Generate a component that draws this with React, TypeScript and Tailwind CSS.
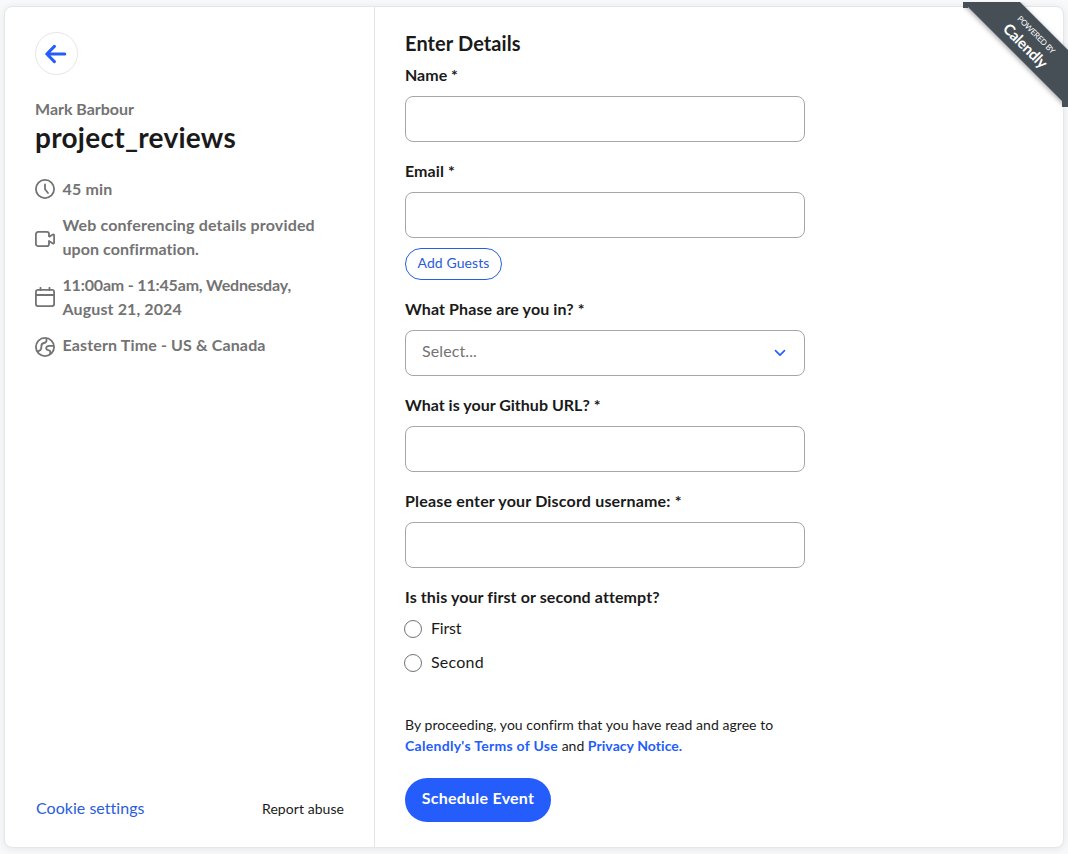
import React from "react";

const ink = "text-[#1a1a1a]";

function ClockIcon() {
  return (
    <svg className="h-5 w-5 shrink-0" viewBox="0 0 20 20" fill="none" stroke="currentColor" strokeWidth="1.8" strokeLinecap="round">
      <circle cx="10" cy="10" r="9.1" />
      <path d="M10 5.5V10.2L13 14" />
    </svg>
  );
}

function VideoIcon() {
  return (
    <svg className="mt-1.5 h-5 w-5 shrink-0" viewBox="0 0 20 20" fill="none" stroke="currentColor" strokeWidth="1.8" strokeLinejoin="round">
      <path d="M14 7V4.1A2.2 2.2 0 0 0 11.8 1.9H3.1A2.2 2.2 0 0 0 .9 4.1V13.9A2.2 2.2 0 0 0 3.1 16.1H11.8A2.2 2.2 0 0 0 14 13.9V11L17.8 13.4A.8.8 0 0 0 19.1 12.8V5.2A.8.8 0 0 0 17.8 4.6L14 7" />
    </svg>
  );
}

function CalendarIcon() {
  return (
    <svg className="h-5 w-5 shrink-0" viewBox="0 0 20 20" fill="none" stroke="currentColor" strokeWidth="1.8" strokeLinecap="round">
      <rect x=".9" y="2.9" width="18.2" height="16.2" rx="2" />
      <path d="M.9 8H19.1M5.5 .8V3M14.5 .8V3" />
    </svg>
  );
}

function GlobeIcon() {
  return (
    <svg className="mt-[3px] h-5 w-5 shrink-0" viewBox="0 0 20 20" fill="none" stroke="currentColor" strokeWidth="1.8">
      <circle cx="10" cy="10" r="9.1" />
      <path d="M11.5 1V3.6C11.5 5.2 10.6 5.8 9 6C7.2 6.3 6.3 7.4 6.4 9.2C6.5 11.4 6 12.9 4.4 13.6L2.4 14.6" />
      <path d="M19 8.8H14.5C12.3 8.8 11.1 9.9 11.2 11.3C11.3 12.8 12.5 13.2 14 13.3C15.6 13.4 15.3 15 15.1 17.3" />
    </svg>
  );
}

function Detail({ icon, children, gap }: { icon: React.ReactNode; children: React.ReactNode; gap?: string }) {
  return (
    <div className={`flex items-center gap-[7.5px] ${gap ?? "mt-3"}`}>
      {icon}
      <div>{children}</div>
    </div>
  );
}

function Field({ label, tracking, children }: { label: string; tracking: string; children?: React.ReactNode }) {
  return (
    <div>
      <label className={`block h-6 text-base leading-6 font-bold ${tracking}`}>{label}</label>
      <div className="mt-[9px] flex h-[46px] w-[400px] items-center justify-between rounded-lg border border-[#a6a6a6] px-4">{children}</div>
    </div>
  );
}

function Radio({ label, tracking }: { label: string; tracking: string }) {
  return (
    <label className="-ml-px flex h-6 items-center gap-[9px]">
      <span className="mt-0.5 h-[18px] w-[18px] rounded-full border border-[#737373]" />
      <span className={`text-base leading-6 ${tracking}`}>{label}</span>
    </label>
  );
}

function Ribbon() {
  return (
    <div className="absolute top-0.5 right-0 h-[105px] w-[105px] overflow-hidden">
      <svg className="absolute inset-0" width="105" height="105" viewBox="0 0 105 105">
        <defs>
          <filter id="ribbon-shadow" x="-10%" y="-10%" width="120%" height="120%">
            <feDropShadow dx="-1" dy="1" stdDeviation="2.5" floodColor="#000" floodOpacity=".35" />
          </filter>
        </defs>
        <path d="M-10 -10H47L115 58V115L-10 -10Z" fill="#474f57" filter="url(#ribbon-shadow)" />
        <path d="M0 0H5V6H0ZM99 99H105V105H99Z" fill="#474f57" />
      </svg>
      <div className="absolute top-[38.6px] left-[66.8px] flex -translate-x-1/2 -translate-y-1/2 rotate-45 flex-col items-center whitespace-nowrap text-white">
        <span className="text-[8px] leading-[12px] tracking-[-0.25px]">POWERED BY</span>
        <span className="text-[15px] leading-[18px] font-bold tracking-[-0.3px]">Calendly</span>
      </div>
    </div>
  );
}

export default function App() {
  return (
    <div className={`relative h-[854px] w-[1068px] overflow-hidden bg-[#f8f9fb] pt-1.5 pl-1 font-['Lato','Liberation_Sans',sans-serif] ${ink}`}>
      <main className="flex h-[842px] w-[1060px] rounded-lg border border-[#e5e6e7] bg-white shadow-[0_1px_8px_rgba(0,0,0,0.08)]">
        <aside className="flex w-[370px] flex-col border-r border-[#e3e4e6] px-[30px] pt-[25px]">
          <button className="flex h-[43px] w-[43px] items-center justify-center rounded-full border border-[#e6e6e6] pr-px text-[#245dfb]">
            <svg width="22" height="20" viewBox="0 0 22 20" fill="none" stroke="currentColor" strokeWidth="3" strokeLinecap="round" strokeLinejoin="round">
              <path d="M19.8 10H2M9.4 2.4L1.8 10L9.4 17.6" />
            </svg>
          </button>
          <div className="mt-[22px] text-base leading-6 font-bold tracking-[-0.02px] text-[#737373]">Mark Barbour</div>
          <h1 className="text-[28px] leading-8 font-bold tracking-[0.27px]">project_reviews</h1>
          <div className="text-base leading-6 font-bold whitespace-nowrap text-[#737373]">
            <Detail gap="mt-6" icon={<ClockIcon />}>
              <span className="tracking-[0.17px]">45 min</span>
            </Detail>
            <Detail icon={<VideoIcon />}>
              <span className="block tracking-[0.16px]">Web conferencing details provided</span>
              <span className="block tracking-[0.075px]">upon confirmation.</span>
            </Detail>
            <Detail icon={<CalendarIcon />}>
              <span className="block tracking-[-0.17px]">11:00am - 11:45am, Wednesday,</span>
              <span className="block tracking-[0.12px]">August 21, 2024</span>
            </Detail>
            <Detail icon={<GlobeIcon />}>
              <span className="tracking-[0.14px]">Eastern Time - US &amp; Canada</span>
            </Detail>
          </div>
          <div className="mt-auto mb-[25px] flex items-center justify-between pl-px">
            <a className="pb-0.5 text-base leading-6 tracking-[0.03px] text-[#2a5cdb]">Cookie settings</a>
            <a className="text-sm leading-6 tracking-[0.06px]">Report abuse</a>
          </div>
        </aside>

        <section className="px-[30px] pt-[24px]">
          <h2 className="text-xl leading-6 font-bold tracking-[0.1px]">Enter Details</h2>
          <div className="mt-2 flex flex-col gap-[17px]">
            <Field label="Name *" tracking="tracking-[0px]" />
            <div>
              <Field label="Email *" tracking="tracking-[0.1px]" />
              <button className="mt-2.5 flex h-8 w-[97px] items-center justify-center rounded-full border border-[#2a5cdb] pb-0.5 text-sm tracking-[0.1px] text-[#2a5cdb]">
                Add Guests
              </button>
            </div>
            <Field label="What Phase are you in? *" tracking="tracking-[0.11px]">
              <span className="pb-1 text-base tracking-[0.11px] text-[#737373]">Select...</span>
              <svg className="mr-0.5" width="12" height="8" viewBox="0 0 12 8" fill="none" stroke="#245dfb" strokeWidth="1.6" strokeLinecap="round" strokeLinejoin="round">
                <path d="M1.5 1.6L6 6.1L10.5 1.6" />
              </svg>
            </Field>
            <Field label="What is your Github URL? *" tracking="tracking-[0.01px]" />
            <Field label="Please enter your Discord username: *" tracking="tracking-[0.18px]" />
          </div>
          <div className="mt-[17px] text-base leading-6 font-bold tracking-[0.11px]">Is this your first or second attempt?</div>
          <div className="mt-[7px] flex flex-col gap-2.5">
            <Radio label="First" tracking="tracking-[-0.2px]" />
            <Radio label="Second" tracking="tracking-[0.24px]" />
          </div>
          <p className="mt-10 text-sm leading-[21px] whitespace-nowrap">
            <span className="block tracking-[0.055px]">By proceeding, you confirm that you have read and agree to</span>
            <a className="font-bold tracking-[0.29px] text-[#245dfb]">Calendly's Terms of Use</a> and{" "}
            <a className="font-bold tracking-[0.06px] text-[#245dfb]">Privacy Notice.</a>
          </p>
          <button className="mt-[22px] flex h-11 w-[146px] items-center justify-center rounded-full bg-[#245dfb] pb-1 text-base font-bold tracking-[0.24px] text-white">
            Schedule Event
          </button>
        </section>
      </main>
      <Ribbon />
    </div>
  );
}
